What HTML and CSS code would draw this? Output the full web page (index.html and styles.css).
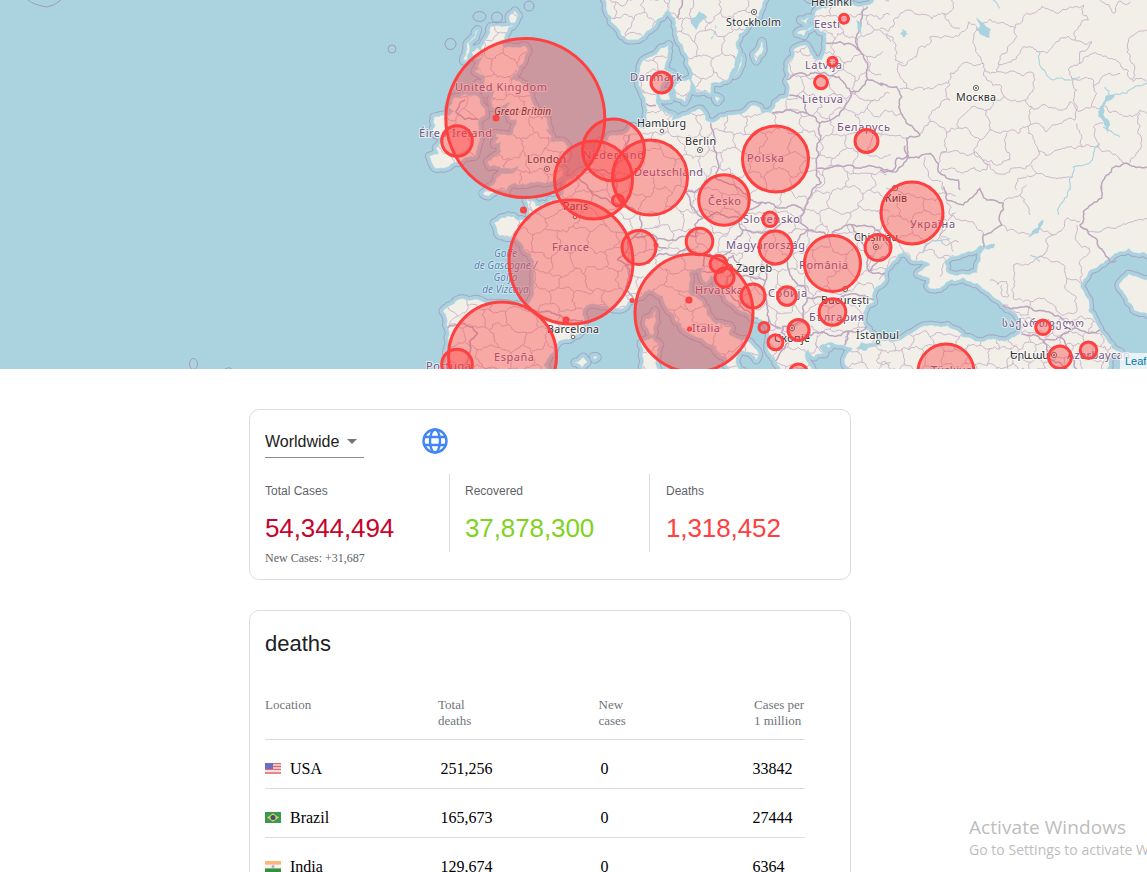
FILE: index.html
```html
<!DOCTYPE html>
<html lang="en">
<head>
<meta charset="utf-8">
<title>Covid tracker</title>
<link rel="stylesheet" href="styles.css">
</head>
<body>
<section class="map">
<svg class="map-canvas" width="1147" height="369" viewBox="0 0 1147 369">
  <defs><clipPath id="land-clip"><path id="clip-land" clip-rule="evenodd"/></clipPath></defs>
  <path id="zone-line"/>
  <path id="zone-water"/>
  <path id="shallow"/>
  <path id="land"/>
  <g clip-path="url(#land-clip)"><path id="regions"/></g>
  <path id="borders"/>
  <path id="rivers"/>
  <path id="lakes"/>
  <g class="zone">
    <path d="M28 0Q34 5 47 7Q54 6 61 0"/><circle cx="392" cy="49" r="4"/>
    <ellipse cx="479.500" cy="16.500" rx="6.500" ry="5"/><circle cx="497" cy="17.500" r="5.500"/><circle cx="450.500" cy="44" r="5.500"/><circle cx="529" cy="6" r="5"/>
    <ellipse cx="193.500" cy="364" rx="4" ry="5.500"/><path d="M225 369q4-3 7 0"/>
  </g>
  <g class="country">
    <text x="455" y="91" textLength="92">United Kingdom</text><text x="419" y="137" textLength="73">Éire / Ireland</text>
    <text x="583" y="159" textLength="61">Nederland</text><text x="634" y="176" textLength="69">Deutschland</text>
    <text x="630" y="81" textLength="52">Danmark</text><text x="747" y="162" textLength="37">Polska</text>
    <text x="708" y="205" textLength="33">Česko</text><text x="743" y="223" textLength="57">Slovensko</text>
    <text x="726" y="249" textLength="79">Magyarország</text><text x="799" y="269" textLength="49">România</text>
    <text x="552" y="251" textLength="37">France</text><text x="494" y="361" textLength="40">España</text>
    <text x="426" y="370" textLength="45">Portuga</text><text x="695" y="294" textLength="48">Hrvatska</text>
    <text x="692" y="332" textLength="28">Italia</text><text x="768" y="297" textLength="39">Србија</text>
    <text x="809" y="321" textLength="55">България</text><text x="910" y="228" textLength="45">Україна</text>
    <text x="837" y="131" textLength="53">Беларусь</text><text x="802" y="103" textLength="41">Lietuva</text>
    <text x="805" y="69" textLength="37">Latvija</text><text x="814" y="28" textLength="26">Eesti</text>
    <text x="1002" y="327" textLength="82">საქართველო</text><text x="1067" y="359" textLength="63">Azərbaycan</text>
    <text x="931" y="374" textLength="41">Türkiye</text>
  </g>
  <g class="city">
    <text x="527" y="163" textLength="39">London</text><text x="563" y="210" textLength="25">Paris</text>
    <text x="637" y="127" textLength="49">Hamburg</text><text x="685" y="145" textLength="31">Berlin</text>
    <text x="726" y="26" textLength="55">Stockholm</text><text x="811" y="6" textLength="41">Helsinki</text>
    <text x="956" y="101" textLength="40">Москва</text><text x="885" y="202" textLength="22">Київ</text>
    <text x="854" y="241" textLength="44">Chișinău</text><text x="736" y="272" textLength="36">Zagreb</text>
    <text x="821" y="304" textLength="48">București</text><text x="774" y="342" textLength="36">Скопје</text>
    <text x="856" y="339" textLength="43">İstanbul</text><text x="547" y="333" textLength="52">Barcelona</text>
    <text x="1010" y="359" textLength="39">Երևան</text><text x="494" y="115" textLength="57" class="island">Great Britain</text>
  </g>
  <g class="sea"><text x="505.500" y="257">Golfe</text><text x="505.500" y="269">de Gascogne /</text><text x="505.500" y="281">Golfo</text><text x="505.500" y="293">de Vizcaya</text></g>
  <g class="capital">
    <circle cx="547" cy="169" r="2.600"/><circle cx="700" cy="150" r="2.600"/><circle cx="754" cy="12" r="2.600"/><circle cx="976" cy="88" r="2.600"/><circle cx="895" cy="188" r="2.600"/><circle cx="876" cy="247" r="2.600"/><circle cx="792" cy="328" r="2.600"/><circle cx="845" cy="289" r="2.600"/><circle cx="1054" cy="355" r="2.600"/><circle cx="730" cy="267" r="2.600"/><circle cx="662" cy="131" r="1.800"/><circle cx="573" cy="337" r="1.800"/><circle cx="575" cy="217" r="1.800"/><circle cx="878" cy="342" r="1.800"/>
  </g>
  <g class="capital-dot"><circle cx="547" cy="169" r=".9"/><circle cx="700" cy="150" r=".9"/><circle cx="754" cy="12" r=".9"/><circle cx="976" cy="88" r=".9"/><circle cx="876" cy="247" r=".9"/><circle cx="792" cy="328" r=".9"/><circle cx="1054" cy="355" r=".9"/></g>
  <g class="cases">
    <circle cx="525.300" cy="118" r="79.500"/><circle cx="457" cy="141" r="15.300"/><circle cx="613.500" cy="150" r="31"/><circle cx="593.500" cy="180" r="39"/><circle cx="650" cy="177.500" r="37.500"/><circle cx="618" cy="200.500" r="5.500"/>
    <circle cx="571" cy="262" r="62"/><circle cx="639" cy="247.500" r="17"/><circle cx="656" cy="245" r="1"/><circle cx="661.500" cy="82.500" r="10.500"/>
    <circle cx="496" cy="118" r="2"/><circle cx="523.500" cy="210" r="2"/><circle cx="566" cy="320" r="2"/><circle cx="632" cy="300.500" r="1"/>
    <circle cx="694" cy="313" r="59"/><circle cx="689" cy="300" r="2"/><circle cx="689.500" cy="329" r="1"/>
    <circle cx="775.500" cy="159" r="33"/><circle cx="724" cy="200" r="25.300"/><circle cx="770" cy="219.300" r="7.300"/><circle cx="775.500" cy="247.500" r="16.500"/><circle cx="699.500" cy="241.500" r="13.300"/>
    <circle cx="718.500" cy="264" r="8.500"/><circle cx="724.500" cy="277.500" r="9.500"/><circle cx="753" cy="296" r="12"/><circle cx="787" cy="296" r="9.300"/><circle cx="764" cy="327.500" r="5"/><circle cx="798.500" cy="330" r="10.500"/><circle cx="775.500" cy="342.300" r="7.500"/><circle cx="798.500" cy="373" r="9"/>
    <circle cx="832.500" cy="312" r="13.300"/><circle cx="832.500" cy="263.500" r="28"/><circle cx="878" cy="247.500" r="13"/><circle cx="912" cy="213" r="31"/><circle cx="866.500" cy="141" r="11.500"/><circle cx="821" cy="82.300" r="6.500"/><circle cx="832.500" cy="61.800" r="4.500"/><circle cx="844" cy="18.800" r="4.500"/>
    <circle cx="502.500" cy="356" r="54"/><circle cx="457" cy="364.500" r="15.300"/><circle cx="946" cy="372" r="28"/><circle cx="1043" cy="327.300" r="7.300"/><circle cx="1060" cy="357.300" r="11.300"/><circle cx="1088.500" cy="350.300" r="8.300"/>
  </g>
</svg>
<a class="attribution">Leaflet</a>
</section>

<main class="content">
  <section class="card summary">
    <div class="toolbar">
      <div class="select"><span>Worldwide</span><i class="caret"></i></div>
      <svg class="globe" width="28" height="28" viewBox="0 0 28 28"><circle cx="14" cy="14" r="11.500"/><ellipse cx="14" cy="14" rx="5" ry="11.500"/><path d="M3.500 10h21M3.500 18h21"/></svg>
    </div>
    <div class="stats">
      <div class="stat"><div class="label">Total Cases</div><div class="number total">54,344,494</div><div class="note">New Cases: +31,687</div></div>
      <div class="stat divided"><div class="label">Recovered</div><div class="number recovered">37,878,300</div></div>
      <div class="stat divided"><div class="label">Deaths</div><div class="number deaths">1,318,452</div></div>
    </div>
  </section>
  <section class="card listing">
    <h2>deaths</h2>
    <div class="row head"><span>Location</span><span>Total<br>deaths</span><span>New<br>cases</span><span>Cases per<br>1 million</span></div>
    <div class="row"><span class="place"><svg class="flag" width="16" height="11" viewBox="0 0 16 11"><path fill="#f6dede" d="M0 0h16v11H0z"/><path stroke="#df6b70" stroke-width="1.300" d="M0 .7h16M0 3.500h16M0 6.300h16M0 10h16"/><path fill="#6a6fc0" d="M0 0h8v6H0z"/></svg>USA</span><span>251,256</span><span>0</span><span>33842</span></div>
    <div class="row"><span class="place"><svg class="flag" width="16" height="11" viewBox="0 0 16 11"><path fill="#379a55" d="M0 0h16v11H0z"/><path fill="#d8cf4b" d="M8 1.200l6 4.300-6 4.300-6-4.300z"/><circle cx="8" cy="5.500" r="2.500" fill="#3f4f88"/></svg>Brazil</span><span>165,673</span><span>0</span><span>27444</span></div>
    <div class="row"><span class="place"><svg class="flag" width="16" height="11" viewBox="0 0 16 11"><path fill="#f3f3f1" d="M0 0h16v11H0z"/><path fill="#f9b878" d="M0 0h16v3.600H0z"/><path fill="#35923b" d="M0 7.400h16V11H0z"/><circle cx="8" cy="5.500" r="1.500" fill="#a9aed2"/></svg>India</span><span>129,674</span><span>0</span><span>6364</span></div>
  </section>
</main>
<div class="watermark"><div class="watermark-title">Activate Windows</div><div class="watermark-text">Go to Settings to activate Windows.</div></div>
<script src="map.js"></script>
</body>
</html>
```

FILE: styles.css
```css
* { box-sizing: border-box; }
html, body { height: 872px; overflow: hidden; }
body { margin: 0; position: relative; background: #fff; font-family: "Liberation Serif", "Times New Roman", serif; color: #000; }

.map { position: relative; height: 369px; overflow: hidden; background: #aad3df; }
.map-canvas { display: block; }
#zone-line { fill: none; stroke: #a5a5c4; stroke-width: 9.6; stroke-linejoin: round; }
#zone-water { fill: none; stroke: #aad3df; stroke-width: 7.6; stroke-linejoin: round; }
#shallow { fill: none; stroke: #c6e0e3; stroke-width: 1; }
#land { fill: #f2efe9; fill-rule: evenodd; }
#regions { fill: none; stroke: #c9b3c9; stroke-width: .95; }
#borders { fill: none; stroke: #bda5be; stroke-width: 1.5; stroke-linejoin: round; }
#rivers { fill: none; stroke: #aad3df; stroke-width: 1.1; }
#lakes { fill: #aad3df; }
.zone { fill: none; stroke: #a09cc0; stroke-width: 1; }
.country, .city, .sea { font-family: "Noto Sans", "DejaVu Sans", sans-serif; paint-order: stroke; stroke-linejoin: round; }
.country { font-size: 11px; fill: #755480; stroke: rgba(255,255,255,.65); stroke-width: 2px; }
.city { font-size: 10.7px; fill: #2d2d2d; stroke: rgba(255,255,255,.7); stroke-width: 2px; }
.island { font-style: italic; font-size: 10px; }
.sea { font-size: 10px; font-style: italic; fill: #5b80b8; text-anchor: middle; stroke: rgba(255,255,255,.5); stroke-width: 1.5px; }
.capital { fill: #fff; stroke: #555; stroke-width: .9; }
.capital-dot { fill: #444; }
.cases { fill: #ff4040; fill-opacity: .4; stroke: #ff4040; stroke-width: 3; }
.attribution { position: absolute; left: 1120px; bottom: 0; width: 60px; height: 16px; padding-left: 5px; background: rgba(255,255,255,.7); color: #0078a8; font: 11px/16px "Liberation Sans", Arial, sans-serif; }

.content { width: 602px; margin: 40px 0 0 249px; display: flex; flex-direction: column; gap: 30px; }
.card { border: 1px solid #dadce0; border-radius: 10px; background: #fff; padding: 0 15px; }
.summary { height: 171px; }
.toolbar { display: flex; padding-top: 16px; height: 64px; }
.select { display: flex; align-items: center; width: 99px; height: 32px; border-bottom: 1px solid #8c8c8c; font: 16px "Liberation Sans", Arial, sans-serif; color: #212121; }
.caret { margin-left: 8px; border: 5px solid transparent; border-top-color: #757575; border-bottom: 0; }
.globe { margin: 1px 0 0 57px; fill: none; stroke: #4285f4; stroke-width: 2.4; }
.stats { display: flex; }
.stat { flex: none; width: 184px; height: 78px; padding-top: 9px; }
.stat.divided { width: 200px; border-left: 1px solid #dadce0; padding-left: 15px; }
.stat.divided:last-child { width: 185px; padding-left: 16px; }
.label { font: 12px/16px "Liberation Sans", Arial, sans-serif; color: #5f6368; }
.number { margin-top: 13px; font: 26px/32px "Liberation Sans", Arial, sans-serif; letter-spacing: -.1px; }
.total { color: #c5032b; }
.recovered { color: #7ed321; }
.deaths { color: #ff4040; }
.note { margin-top: 6px; font-size: 12px; line-height: 16px; color: #5f6368; }

.listing { height: 300px; padding-right: 45px; }
h2 { margin: 19px 0 0; font: 22px/28px "Liberation Sans", Arial, sans-serif; color: #202124; }
.row { display: grid; grid-template-columns: 175.6px 160px 152px 1fr; height: 49px; padding-top: 20px; border-bottom: 1px solid #dadce0; font-size: 16px; line-height: 18px; }
.row.head { grid-template-columns: 173px 160.5px 155.5px 1fr; height: 71px; margin-top: 11px; padding-top: 28px; font-size: 13px; line-height: 16px; color: #70757a; white-space: nowrap; }
.place { display: flex; gap: 9px; }
.flag { margin-top: 3px; }
.watermark { position: absolute; left: 969px; top: 815px; width: 178px; overflow: hidden; white-space: nowrap; color: #bdbdbd; font-family: "Open Sans", "Noto Sans", sans-serif; }
.watermark-title { font-size: 19px; line-height: 25px; letter-spacing: .07px; }
.watermark-text { font-size: 14px; line-height: 20px; letter-spacing: .03px; }
```

FILE: map.js
```js
// Web Mercator, zoom level 4, shifted to the visible window.
const project = ([lon, lat]) => [548 + 11.378 * lon, 854 - 651.9 * Math.log(Math.tan(Math.PI / 4 + lat * Math.PI / 360))];
const parse = s => s.trim().split(/\s+/).map(p => p.split(',').map(Number));
let seed = 7;
const random = () => { seed = (seed * 16807) % 2147483647; return seed / 2147483647 - 0.5; };

// Midpoint displacement gives lines a natural roughness; the long closing edges off the map stay straight.
function rough(a, b, amount) {
  const dx = b[0] - a[0], dy = b[1] - a[1], length = Math.hypot(dx, dy);
  if (length < 3 || length > 250) return [b];
  const r = random() * amount;
  const m = [(a[0] + b[0]) / 2 - dy * r, (a[1] + b[1]) / 2 + dx * r];
  return rough(a, m, amount).concat(rough(m, b, amount));
}
function line(points, amount, closed) {
  const pts = closed ? points.concat([points[0]]) : points;
  let out = [pts[0]];
  for (let i = 1; i < pts.length; i++) out = out.concat(rough(pts[i - 1], pts[i], amount));
  return 'M' + out.map(p => p[0].toFixed(1) + ' ' + p[1].toFixed(1)).join('L') + (closed ? 'Z' : '');
}

const coasts = [
  // Continental Europe and Asia
  '-9,38 -9.4,38.8 -8.9,39.8 -8.7,41 -8.9,42.1 -9.2,43 -8.2,43.5 -7.7,43.75 -5.8,43.6 -3.8,43.45 -1.8,43.35 -1.4,43.8 -1.2,44.6 -1.1,45.5 -1.2,46.1 -2.1,46.8 -2.5,47.3 -3.3,47.6 -4.4,47.8 -4.7,48.4 -3.5,48.8 -2.7,48.55 -1.5,48.65 -1.6,49.2 -1.9,49.7 -1.3,49.65 -1.1,49.35 .1,49.4 .2,49.7 1.4,50.1 1.6,50.8 2.5,51.1 3.5,51.5 4.1,52 4.7,53 5.1,52.4 5.4,53.2 7,53.45 7.3,53.7 8,53.7 8.5,53.6 8.8,54 8.7,54.4 8.6,55 8.2,55.6 8.1,56.5 8.6,57.1 9.6,57.3 10.6,57.75 10.5,57.2 10.2,56.6 10.9,56.4 10.2,56 9.8,55.5 9.5,54.9 10,54.6 11,54.3 10.9,54 12.2,54.3 13.4,54.6 13.8,54.1 14.3,53.9 16.2,54.3 17.8,54.75 18.6,54.7 18.7,54.35 19.6,54.45 20,54.9 21.1,55.2 21,56 21.1,56.8 21.6,57.5 22.6,57.75 23.3,57.1 24.1,57.05 24.4,57.8 24.5,58.3 23.6,58.6 23.5,59.2 24.7,59.5 26,59.6 28,59.55 29,59.95 30,60 30,63 70,63 70,35 27,35 26.8,39.2 26.1,39.5 26.2,40 26.8,40.6 26,40.8 25,40.95 24.3,40.85 23.8,40.7 24.3,40.2 23.7,40.2 23.4,40 22.9,40.5 22.6,40.2 22.9,39.5 23.2,39.1 23.5,38 21,38 20.7,38.9 20,39.7 19.4,40.4 19.5,41.4 19.4,41.9 18.4,42.5 17,43 15.9,43.6 15.1,44.3 14.8,45 14.3,45.3 13.9,44.8 13.5,45.4 13.6,45.75 12.4,45.4 12.4,44.8 12.3,44.2 13.5,43.6 14,42.7 14.7,42.15 16.1,41.9 15.9,41.5 17,41.1 18.5,40.2 18.3,39.8 17.8,40.3 16.9,40.5 16.5,39.7 17.1,39 16.5,38 15.8,38 16,39 15.7,40 14.9,40.3 14.4,40.8 13.6,41.25 12.5,41.5 11.7,42.2 10.9,42.9 10.4,43.3 10.1,44 8.9,44.4 8.2,43.95 7.3,43.7 6.6,43.2 5.3,43.3 4.5,43.4 3.9,43.5 3.1,43.1 3.2,42.4 3,41.8 2.1,41.3 .9,41 .2,40.2 -.4,39.4 0,38.8 -.5,38',
  // Great Britain
  '-5,58.6 -3.1,58.65 -4.1,57.8 -3.9,57.6 -2,57.7 -1.8,57.4 -2.1,57 -2.8,56.4 -3.4,56 -2.5,56 -2,55.8 -1.6,55.4 -1.4,54.9 -1.1,54.6 -.5,54.4 -.1,54.1 .1,53.6 -.2,53.6 .3,53.2 .1,52.9 .5,52.9 1.2,52.95 1.7,52.7 1.6,52.1 1,51.8 .6,51.5 1.4,51.4 1.3,51.1 .9,50.9 .2,50.75 -.8,50.75 -1.5,50.75 -2,50.6 -2.5,50.6 -3,50.7 -3.5,50.5 -3.7,50.2 -4.2,50.35 -5,50.1 -5.2,49.97 -5.7,50.1 -5,50.5 -4.5,51 -4.1,51.2 -3.1,51.2 -2.6,51.6 -3.1,51.4 -3.8,51.5 -4.3,51.6 -5.1,51.6 -5.3,51.85 -4.7,52.1 -4.1,52.4 -4.1,52.9 -4.7,52.8 -4.3,53.1 -4.6,53.35 -4,53.3 -3.1,53.3 -3,53.6 -2.8,54.1 -3.3,54.1 -3.6,54.5 -3.3,54.95 -4,54.8 -4.9,54.7 -5,55 -4.7,55.5 -4.9,55.9 -5.5,55.4 -5.5,56.2 -6.2,56.7 -5.7,57.2 -5.8,57.7 -5.3,58.1',
  // Ireland and northern isles
  '-6,53.3 -6.2,53.9 -5.5,54.3 -5.7,54.7 -6.1,55.2 -7.3,55.35 -8.3,55.15 -8.7,54.7 -8.2,54.5 -8.6,54.3 -10,54.2 -9.9,53.8 -10.1,53.4 -9,53.2 -9.5,52.8 -9.8,52.6 -9.6,52.3 -10.4,52.15 -10.2,51.8 -9.8,51.5 -9,51.55 -8.3,51.8 -7.5,52 -6.4,52.2 -6.2,52.7',
  '-7.4,57 -7.2,57.3 -7.1,57.8 -6.2,58.45 -6.4,58.1 -7,57.8 -7.2,57', '-6.7,57.4 -6.2,57.6 -5.8,57.2 -6.3,57.1',
  '-3.4,59 -2.9,59.3 -2.6,59.1 -2.9,58.8 -3.3,58.8', '-6.4,56.5 -5.9,56.6 -5.8,56.3', '-6.4,55.8 -6.1,55.9 -6.1,55.6',
  // Scandinavia
  '5,61 5,59.8 5.2,59.3 5.6,58.8 6.5,58.2 7.5,58 8.5,58.3 9.5,58.9 10.4,59.3 10.7,59.8 10.8,59.2 11.2,59 11.3,58.3 11.9,57.6 12.3,56.9 12.8,56.4 12.6,56.1 13,55.5 14.2,55.4 14.3,55.9 15.8,56.1 16.4,56.7 16.7,57.5 16.8,58.3 17.6,58.8 18.5,59.1 19,59.8 18,61',
  '11.1,55.7 12.4,56.1 12.5,55.6 12,55 11.3,55.2', '9.8,55.5 10.6,55.5 10.7,55.1 10,55.1', '18.1,57.3 18.8,57.9 18.9,57.5 18.3,57',
  '16.4,56.3 17,57.2 16.6,56.4', '14.7,55.25 15.1,55.15 14.9,55', '21.9,58.3 23.3,58.6 22.5,58.2', '22.2,58.9 22.9,59 22.7,58.75', '22.2,60.3 23,59.83 24.5,60.05 25,60.5',
  // Mediterranean islands
  '9.4,43 9.5,42.3 9.2,41.4 8.6,42 8.6,42.5', '9.2,41.25 9.8,40.8 9.6,39.2 9,38.9 8.4,39 8.4,40.4 8.2,40.9', '2.4,39.6 3.1,39.95 3.4,39.6 3,39.3', '4,40 4.3,39.95 4.1,39.85', '24.5,40.75 24.8,40.75 24.7,40.6',
  // Black Sea, Azov, Caspian, Marmara (cut out of the land)
  '28,41.9 28.3,41.5 29,41.2 31,41.1 32.3,41.7 34,42 35.1,42.05 36,41.7 36.4,41.3 38,41 39.5,41.1 41,41.3 41.6,41.7 41.5,42.5 40,43.4 38.5,44.3 37.3,44.8 36.6,45.1 35.4,45 34,44.4 33.4,44.6 33.6,45.1 32.5,45.35 33.6,45.9 32,46.2 31.5,46.6 30.7,46.5 29.6,45.6 29.6,45 28.7,44.4 28.6,43.6 27.9,43.2 27.6,42.5',
  '36.6,45.3 37.7,45.4 38,46.1 38.2,46.7 39.2,47.1 38,47.1 36.8,46.7 35.2,46.3 34.8,46.1 35,45.5 35.4,45.3',
  '49.3,37 49.5,40.2 50.3,40.3 49.2,41 48.3,42 47.5,43 47.4,43.8 46.8,44.5 47.5,45.5 48.8,46 49.5,46.4 51,46.9 56,47 56,45.3 51,45.3 50.2,44.6 51,43.6 51.5,43.1 56,42.5 56,37',
  '27,40.5 27.5,41 29,41 29.4,40.7 28,40.4'
];
const borders = [
  '-8.8,41.9 -8.2,42.1 -6.6,41.95 -6.2,41.6 -6.9,41 -6.9,40.2 -7.3,39.5 -7,39', '-1.8,43.35 -.7,42.9 .7,42.8 1.7,42.5 3.1,42.4',
  '2.5,51.1 3.2,50.7 4.2,50 5.8,49.5 6.4,49.5 8.2,49 7.6,47.6 7,47.3 6.1,46.2 6.9,45.9 7,45 6.9,44.4 7.5,43.8', '3.4,51.4 4.9,51.4 5.7,51.2 6,50.8 6.1,50.1 6.4,49.5', '6,50.8 6.1,51.8 6.9,52.2 7.1,53.3',
  '7.6,47.6 9,47.7 9.6,47.5 10.4,47.4 12,47.6 13,47.6 12.9,48.3 13.8,48.7 12.5,49.5 12.2,50.2 14.3,51 14.8,50.9 15,51.5 14.6,52.5 14.3,53.9',
  '6.9,45.9 7.9,45.95 8.9,46 9.3,46.4 10.4,46.6 12.2,46.9 13.7,46.5 13.6,45.8', '9.6,47.5 9.5,47.1 10.4,46.9', '13.8,48.7 15,49 16.9,48.7 17.1,48 16.4,47.4 16,46.7 14.8,46.5 13.7,46.5',
  '14.8,50.9 16.3,50.6 16.9,50.3 18.8,49.6 20,49.3 22.5,49.1 22.2,48.4 20.5,48.4 18.8,47.8 17.1,48', '18.8,49.6 17.2,48.9 16.9,48.7', '22.5,49.1 23,49.9 24,50.7 23.6,51.6 23.6,52.6 23.9,53.9 22.8,54.4 19.7,54.45',
  '22.8,54.4 22.6,55 21.2,55.3', '23.9,53.9 25.6,54.3 26.6,55.5 25,56.3 22,56.4 21,56.1', '26.6,55.5 28.1,56.1 27.7,57.3 27.4,57.5 25.6,57.9 24.4,57.85', '27.4,57.5 27.5,58.8 28.1,59.5',
  '28.1,56.1 29.4,55.8', '31.4,52.7 31.7,52.1 30.6,51.3 27.5,51.5 23.6,51.5', '22.2,48.4 22.9,48 21,46.3 18.8,45.9 17,45.9 16.3,46.5', '22.9,48 24.9,47.7 26.7,48.3 28,47 28.2,45.5 29.6,45.4', '26.7,48.3 28.5,48.2 30,46.5 28.9,46 28.2,45.5',
  '21,46.3 21.5,45 22.6,44.5 22.7,43.9 25.4,43.65 27,44.1 28.6,43.7', '22.7,43.9 22.4,42.4 23,41.4 25,41.4 26.4,41.7 28,42', '26.4,41.7 26.1,40.8', '23,41.4 21,40.9 20.5,41.6 20.6,42 22.4,42.3', '21,40.9 20,39.7', '20.5,41.9 19.4,42.5 19.4,41.9',
  '19.4,42.5 19.2,43.5 19.1,44.9 17,45.2 15.8,45.2 16,44.2 17.6,43 18.5,42.5', '19.1,44.9 18.9,45.9', '13.6,45.5 15.3,45.5 16.3,46.5', '11.3,59 11.8,59.6 12,60.2', '8.6,54.9 9.5,54.8', '-7.3,55.1 -8.1,54.5 -7.3,54.1 -6.2,54.1',
  '40,43.4 42.5,43.2 44.5,42.7 46.4,41.9 48.5,41.8', '41.6,41.5 43.5,41.1 45,41.3 46.4,41.9', '43.5,41.1 43.8,40.1 45,39.6 46.5,39', '45,41.3 46,40.2 46.5,39'
];
// Lines on the eastern sheets, in sheet units (three per pixel).
const north = {
  bold: ['0,250 50,260 65,290 60,330 80,370 120,405 80,415 80,470 150,460 175,490 180,520 235,540 240,570', '0,510 45,505 50,475 80,470', '665,570 670,540 740,490 801,500'],
  thin: ['0,85 25,95 40,60 90,30 120,45 190,40 240,85', '215,0 210,35 190,45', '20,100 45,130 45,180 70,190', '55,190 100,175 150,130 150,110 190,110 265,65 290,90 345,65 405,85 405,75 440,40 530,40 585,20 610,15 625,60 590,90 585,120', '405,85 395,130 355,190 420,160 430,140 470,155 500,160 540,115 585,120 635,125 600,155 600,190', '55,190 60,230 80,265 150,265 205,250 210,220 290,195 310,190', '290,90 285,140 310,190 315,210 350,215', '355,190 350,215 460,220 465,240 435,300 375,290 365,260 320,240 315,210', '150,365 165,330 210,300 210,250', '60,265 80,265', '120,400 150,365 200,400 235,385 235,360 275,320 320,330 330,390 300,420 235,385', '320,330 350,300 375,290', '435,300 455,320 450,375 380,395 330,390', '200,400 200,450 180,470 175,490', '300,420 290,470 310,480', '380,400 375,440 390,480 310,480', '180,460 240,460 310,485 450,495 475,450 445,400 445,378', '455,320 540,330 570,305 590,330 585,360 545,370 450,375', '600,190 565,210 575,235 590,270 580,300 590,330 635,320', '600,190 680,170 720,190 760,245 801,245', '640,260 660,240 720,220', '575,235 640,240 650,280 635,320', '801,90 775,95 750,180 755,240', '475,455 560,440 605,440 655,440 740,490', '605,440 600,400 590,370', '635,320 680,320 715,340 780,330 801,340', '780,340 785,420 740,490', '455,495 470,520 580,530', '655,440 640,380 670,370', '660,0 700,40 715,5 750,5', '0,345 70,345', '0,410 80,415', '180,520 320,510 310,480', '410,570 415,535 470,520', '135,470 145,530 190,570'],
  rivers: ['480,155 475,170 482,200 520,240 570,240 600,230', '660,430 640,470 580,500 570,570', '675,260 690,290 740,280 801,250', '340,0 360,25', '670,380 720,410'],
  lakes: ['290,50 315,75 332,90 330,112 300,103 288,85 300,80', '60,100 75,94 86,103 70,112', '680,285 705,285 695,298 670,320 670,345 690,375 683,402 655,350 660,320']
};
const south = {
  bold: ['190,5 200,45 250,60 300,10 320,45 370,55 365,120 310,150 310,185', '690,232 660,190 600,120 610,80 665,40 665,0', '690,232 710,228'],
  thin: ['370,50 420,30 440,0', '420,30 440,60 450,90', '365,120 450,150 520,150 560,100 600,110', '520,150 500,200 470,220 400,240 405,290 400,340 430,350', '470,220 560,280 620,300', '560,280 555,310 590,340 590,380 540,385 460,350 430,350', '600,120 640,140 700,130 760,110 801,100', '590,120 600,180 630,200 600,240 610,300', '330,285 380,290 385,335 365,330 365,300', '200,50 210,90 290,130 310,150', '190,100 180,150 220,200', '450,350 445,390 370,360'],
  rivers: ['570,0 540,60 535,90', '488,105 470,135 445,155', '130,205 160,165 210,160', '450,210 480,230'],
  lakes: ['485,105 492,108 475,145 445,157 460,135', '325,180 345,177 340,190 315,190']
};
const sheet = (list, ox, oy, amount, closed) => list.map(s => line(parse(s).map(([x, y]) => [ox + x / 3, oy + y / 3]), amount, closed)).join('');

// Administrative regions: an irregular honeycomb clipped to the coast.
function honeycomb(x0, x1, y0, y1, size) {
  const vertex = {}, at = (i, j) => vertex[i + ',' + j] || (vertex[i + ',' + j] = [x0 + i * size * .9 + random() * size * .7, y0 + j * size * 1.3 + ((i + j) % 2 ? size * .35 : 0) + random() * size * .6]);
  let d = '';
  for (let j = 0; y0 + j * size * 1.3 < y1; j++) for (let i = 0; x0 + i * size * .9 < x1; i++) {
    d += line([at(i, j), at(i + 1, j)], .55);
    if ((i + j) % 2) d += line([at(i, j), at(i, j + 1)], .55);
  }
  return d;
}
const set = (id, d) => document.getElementById(id).setAttribute('d', d);
const land = coasts.map(s => line(parse(s).map(project), .32, true)).join('');
['zone-line', 'zone-water', 'shallow', 'land', 'clip-land'].forEach(id => set(id, land));
set('borders', borders.map(s => line(parse(s).map(project), .35)).join('') + sheet(north.bold, 880, 0, .35) + sheet(south.bold, 880, 185, .35));
set('regions', honeycomb(440, 880, -5, 375, 15) + honeycomb(880, 1010, 332, 375, 12) + honeycomb(1010, 1110, 318, 375, 10) + honeycomb(885, 945, 192, 262, 16) + sheet(north.thin, 880, 0, .5) + sheet(south.thin, 880, 185, .5));
set('rivers', sheet(north.rivers, 880, 0, .35) + sheet(south.rivers, 880, 185, .35));
set('lakes', sheet(north.lakes, 880, 0, .35, true) + sheet(south.lakes, 880, 185, .35, true) + ['12.5,58.9 13.3,59.3 14,59 13,58.4', '14.3,58 14.7,58.7 14.8,58.6', '27.1,58.9 27.6,58.7 27.6,58.1 27.2,58.6', '31.1,58.5 31.5,58.4 31.4,58.1'].map(s => line(parse(s).map(project), .3, true)).join(''));
```
